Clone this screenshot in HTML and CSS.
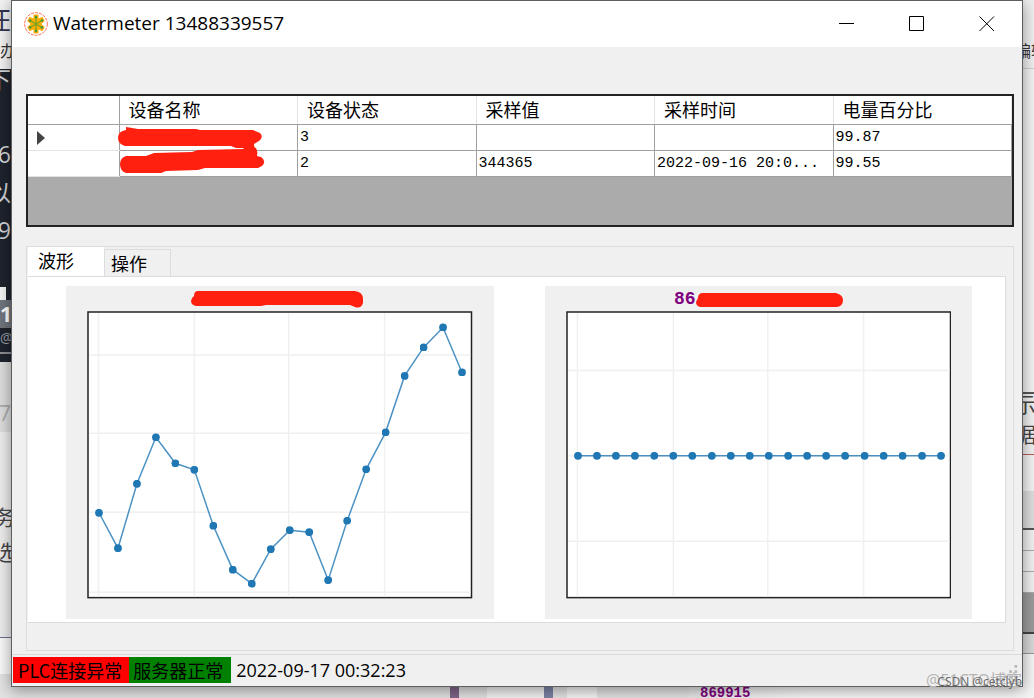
FILE: index.html
```html
<!DOCTYPE html>
<html lang="zh-CN">
<head>
<meta charset="utf-8">
<title>Watermeter 13488339557</title>
<link rel="stylesheet" href="styles.css">
</head>
<body>
<div class="desktop">
  <aside class="edge edge-left">
    <div class="e-top"><span class="frag frag-big">汪</span><span class="frag frag-menu">待办</span></div>
    <div class="e-dark">
      <span class="frag f-light f-first">下</span>
      <span class="frag f-light f-six">6</span>
      <span class="frag f-light">以</span>
      <span class="frag f-light">9</span>
      <span class="e-block"></span>
      <span class="frag f-one">1</span>
      <span class="frag f-at">@C</span>
      <span class="e-rule"></span>
    </div>
    <div class="e-grey"><span class="frag f-seven">7</span></div>
    <div class="e-pale"><span class="frag">务</span><span class="frag">选</span></div>
    <div class="e-white"></div>
    <div class="e-base"></div>
  </aside>

  <main class="window">
    <header class="titlebar">
      <svg class="app-icon" viewBox="0 0 24 24" aria-hidden="true">
        <circle cx="12" cy="12" r="11.300" fill="#fff" stroke="#ff6a4c" stroke-width="1" stroke-dasharray="3 1"/>
        <path d="M9.500 2.500h5v4l4-1.700 2.200 4.200-3.400 3 3.400 3-2.200 4.200-4-1.700v4h-5v-4l-4 1.700-2.200-4.200 3.400-3-3.400-3 2.200-4.200 4 1.700z" fill="#ffad05"/>
        <path d="M12 5v14M6 8.500l12 7M18 8.500l-12 7" stroke="#74a51b" stroke-width="1.300"/>
        <g fill="#3c9b35"><circle cx="12" cy="5" r="1.300"/><circle cx="12" cy="19" r="1.300"/><circle cx="6" cy="8.500" r="1.300"/><circle cx="18" cy="8.500" r="1.300"/><circle cx="6" cy="15.500" r="1.300"/><circle cx="18" cy="15.500" r="1.300"/></g>
      </svg>
      <h1 class="title">Watermeter 13488339557</h1>
      <div class="controls">
        <button class="ctl" type="button" aria-label="最小化"><svg viewBox="0 0 16 16"><path d="M0 7.500h15"/></svg></button>
        <button class="ctl" type="button" aria-label="最大化"><svg viewBox="0 0 16 16"><path d="M.5.5h14v14H.5z"/></svg></button>
        <button class="ctl" type="button" aria-label="关闭"><svg viewBox="0 0 16 16"><path d="M.5.5l14.500 14.500M15 .5L.5 15"/></svg></button>
      </div>
    </header>

    <div class="client">
      <section class="datagrid">
        <table class="grid">
          <thead>
            <tr><th class="rowhead"></th><th>设备名称</th><th>设备状态</th><th>采样值</th><th>采样时间</th><th>电量百分比</th></tr>
          </thead>
          <tbody>
            <tr>
              <td class="rowhead"><svg class="pointer" viewBox="0 0 8 14" aria-hidden="true"><path d="M0 0l8 7-8 7z"/></svg></td>
              <td class="masked">
                <svg class="mask" viewBox="0 0 148 48" aria-hidden="true">
                  <path d="M8 0l12 2h58l4 1 53 0 7 3q4 4-1 8l-5 3q0 4 2 4 2 4 1 8l4 1q6 4 1 9l-4 2H87l-7 2-32 1-5 2H8q-6-2-6-9 0-6 6-8l20 0 8-3 38-1 6-2 46-1-1-1H118l-5-2H7q-7-2-7-8 0-7 8-8z"/>
                </svg>
              </td>
              <td>3</td><td></td><td></td><td>99.87</td>
            </tr>
            <tr><td class="rowhead"></td><td></td><td>2</td><td>344365</td><td>2022-09-16 20:0...</td><td>99.55</td></tr>
          </tbody>
        </table>
      </section>

      <section class="tabs">
        <div class="tablist" role="tablist">
          <button class="tab active" type="button" role="tab" aria-selected="true">波形</button>
          <button class="tab" type="button" role="tab" aria-selected="false">操作</button>
        </div>
        <div class="page" role="tabpanel">
          <figure class="chart">
            <figcaption class="caption caption-first">
              <svg class="strike" viewBox="0 0 172 17" aria-hidden="true"><path d="M7 0h157q8 1 8 8v4q-2 6-8 4l-5-2H75l-5 1H5q-5-1-5-5 0-3 3-5 0-5 4-5z"/></svg>
            </figcaption>
            <svg class="plot" viewBox="0 0 386 288" role="img" aria-label="波形">
              <defs><marker id="dot" viewBox="0 0 8 8" refX="4" refY="4" markerWidth="8" markerHeight="8" markerUnits="userSpaceOnUse"><circle cx="4" cy="4" r="3.900" fill="#1f77b4"/></marker></defs>
              <rect class="frame" x="1" y="1" width="384" height="286"/>
              <path class="lines" d="M11.500 2v284M107.500 2v284M202 2v284M298 2v284M2 44h382M2 122.500h382M2 201.500h382M2 281.500h382"/>
              <polyline class="series" points="12,202 31,237.5 50,173 69,126.5 88.5,152.5 107.5,159 126.5,215 146,259 165,273 184,238.5 203,219.5 222.5,221.5 241.5,269.5 260.5,210 279.5,158.5 299,121.5 318,65 337,36.5 356.5,16.5 375.5,61.5"/>
            </svg>
          </figure>
          <figure class="chart">
            <figcaption class="caption">86<svg class="strike strike-short" viewBox="0 0 147 14" aria-hidden="true"><path d="M7 0h133q7 2 7 7 0 6-6 7H4q-4-1-4-5l2-4q0-5 5-5z"/></svg></figcaption>
            <svg class="plot" viewBox="0 0 386 288" role="img" aria-label="波形">
              <rect class="frame" x="1" y="1" width="384" height="286"/>
              <path class="lines" d="M11.500 2v284M107.500 2v284M202 2v284M298 2v284M2 59.500h382M2 145h382M2 230.500h382"/>
              <polyline class="series" points="12,145 31,145 50,145 69,145 88.5,145 107.5,145 126.5,145 146,145 165,145 184,145 203,145 222.5,145 241.5,145 260.5,145 279.5,145 299,145 318,145 337,145 356.5,145 375.5,145"/>
            </svg>
          </figure>
        </div>
      </section>
    </div>

    <footer class="status">
      <span class="badge bad">PLC连接异常</span><span class="badge good">服务器正常</span><time class="clock">2022-09-17 00:32:23</time>
      <svg class="grip" viewBox="0 0 16 16" aria-hidden="true"><path d="M12 0h3v3h-3zM6 6h3v3H6zM12 6h3v3h-3zM0 12h3v3H0zM6 12h3v3H6zM12 12h3v3h-3z"/></svg>
    </footer>
  </main>

  <aside class="edge edge-right">
    <div class="r-top"><span class="frag frag-menu">编辑</span></div>
    <div class="r-main"></div>
    <div class="r-text"><span class="frag">示</span><span class="frag">据</span></div>
    <div class="r-pale"></div>
    <div class="r-bar"></div>
    <div class="r-cell"></div>
    <div class="r-cell"></div>
    <div class="r-cell"></div>
    <div class="r-dark"></div>
    <div class="r-gap"></div>
    <div class="r-base"></div>
  </aside>

  <div class="under">
    <span class="u-pad"></span><span class="u-plum"></span><span class="u-mid"></span><span class="u-light"></span><span class="u-blue"></span><span class="u-small"></span><span class="u-light2"></span><span class="u-wide"></span><span class="u-text">869915</span>
  </div>

  <span class="mark mark-back">@51CTO博客</span>
  <span class="mark mark-front">CSDN @cetclyb</span>
</div>
</body>
</html>
```

FILE: styles.css
```css
* { box-sizing: border-box; }
body {
  margin: 0;
  font-family: "Open Sans", "Noto Sans CJK SC", sans-serif;
  color: #000;
}
.desktop {
  position: relative;
  display: grid;
  grid-template-columns: 11px minmax(0, 1fr) 11px;
  grid-template-rows: minmax(0, 1fr) 11px;
  height: 100vh;
  overflow: hidden;
  background: #eee;
}

/* Strips of the windows behind */
.edge { display: flex; flex-direction: column; grid-row: 1 / 3; overflow: hidden; }
.edge-left { grid-column: 1; }
.edge-right { grid-column: 3; grid-row: 1 / 3; }
.edge > div { display: flex; flex-direction: column; flex: none; overflow: hidden; }
.edge-left > div { align-items: flex-end; }
.frag { font-size: 21px; line-height: 35px; color: #444; white-space: nowrap; }
.edge-right .frag { text-indent: -8px; }
.e-top { height: 69px; background: #f2f2f3; }
.frag-big { font-size: 26px; line-height: 40px; color: #33334f; }
.frag-menu { font-size: 16px; line-height: 22px; color: #333; }
.edge-left .frag-menu { margin-right: -5px; }
.e-dark { height: 293px; background: #1e232d; }
.f-light { font-size: 23px; line-height: 38px; color: #d4d6d8; }
.f-first { line-height: 20px; }
.f-six { padding-top: 46px; }
.e-block { width: 100%; height: 13px; margin-top: 38px; background: linear-gradient(90deg, #f4f4f4 6px, #1e232d 6px); }
.f-one { width: 100%; line-height: 28px; font-weight: 700; color: #fff; background: #70747c; }
.f-at { font-size: 14px; line-height: 20px; color: #9a9da4; align-self: flex-start; }
.e-rule { width: 100%; height: 2px; margin-top: 4px; background: #8c8c94; }
.e-grey { height: 70px; background: #dcdcdc; }
.f-seven { padding-top: 34px; color: #aaa; }
.e-pale { height: 206px; padding-top: 68px; background: #ececec; border-bottom: 1px solid #69708c; }
.e-pale .frag { margin-right: -4px; }
.e-white { height: 36px; background: #f8f8f8; }
.e-base { height: 24px; background: #e2e2e2; }

.r-top { height: 69px; padding-top: 40px; background: #eee; border-bottom: 1px solid #ccc; }
.r-main { height: 325px; background: #f2f2f2; border-bottom: 2px solid #555; }
.r-text { height: 61px; background: #f0f0f0; border-bottom: 1px solid #b65c52; }
.r-text .frag { line-height: 40px; }
.r-text .frag:first-child { line-height: 20px; }
.r-pale { height: 36px; background: #f2f2f2; }
.r-bar { height: 39px; background: #ddd; border-bottom: 2px solid #555; }
.r-cell { height: 21px; background: #f0f0f0; border-bottom: 1px solid #aaa; }
.r-dark { height: 41px; background: #9b9b9b; border-bottom: 2px solid #444; }
.r-gap { height: 20px; background: #d8d8d8; border-bottom: 1px solid #999; }
.r-base { height: 44px; background: #f5f5f5; }

.under { grid-column: 2; grid-row: 2; display: flex; background: #e2e2e2; overflow: hidden; }
.under span { flex: none; height: 11px; }
.under .u-pad { width: 439px; }
.u-plum { width: 9px; background: #806488; }
.u-mid { width: 28px; }
.u-light { width: 57px; background: #f2f2f2; }
.u-blue { width: 9px; background: #7b82a4; }
.u-small { width: 14px; }
.u-light2 { width: 30px; background: #f4f4f4; }
.u-wide { width: 92px; }
.under .u-text {
  flex: 1;
  padding-left: 11px;
  font: 700 14px/12px "Liberation Mono", monospace;
  color: #800080;
  background: linear-gradient(90deg, #e6e6e6, #f8f8f8 120px);
}

/* Application window */
.window {
  position: relative;
  grid-column: 2;
  grid-row: 1;
  display: flex;
  flex-direction: column;
  background: #f0f0f0;
  border: 1px solid #5e5e5e;
  box-shadow: 0 3px 14px rgba(0, 0, 0, .4);
}
.titlebar { display: flex; align-items: center; flex: none; height: 46px; padding-left: 12px; background: #fff; }
.app-icon { width: 24px; height: 24px; margin-right: 5px; }
.title { margin: 0; padding-bottom: 2px; font-size: 19px; font-weight: 400; line-height: 26px; white-space: nowrap; }
.controls { display: flex; margin-left: auto; height: 100%; }
.ctl { display: grid; place-items: center; width: 70px; padding: 0; border: 0; background: none; }
.ctl svg { width: 16px; height: 16px; fill: none; stroke: #000; stroke-width: 1; }

.client { display: flex; flex-direction: column; flex: 1; gap: 19px; min-height: 0; padding: 47px 8px 3px 14px; }

/* Data grid */
.datagrid { flex: none; height: 133px; background: #ababab; border: 2px solid #222; }
.grid { width: 100%; border-collapse: collapse; table-layout: fixed; background: #fff; }
.grid th { height: 28px; padding: 0 9px; font-size: 18px; font-weight: 400; line-height: 26px; text-align: left; border: 1px solid #a0a0a0; border-width: 0 0 1px; border-right: 1px solid #e3e3e3; }
.grid td { height: 25px; padding: 1px 2px 0; font: 15px/24px "Liberation Mono", monospace; white-space: nowrap; border: 1px solid #a0a0a0; border-top: 0; }
.grid th.rowhead { width: 91px; border-right-color: #a0a0a0; }
.grid td.rowhead { padding-left: 9px; border-left: 0; border-bottom-color: #e3e3e3; }
.pointer { display: block; width: 8px; height: 14px; fill: #444; }
.grid td.masked { position: relative; }
.mask { position: absolute; z-index: 1; left: -2px; top: 2px; width: 148px; height: 48px; fill: #ff2010; }

/* Tabs */
.tabs { display: flex; flex-direction: column; flex: 1; min-height: 0; padding: 0 7px 28px 1px; border: 1px solid #dcdcdc; }
.tablist { display: flex; align-items: flex-end; height: 29px; }
.tab { height: 27px; width: 67px; padding: 0 0 1px 6px; font: 18px/24px "Noto Sans CJK SC", sans-serif; color: #000; text-align: left; background: #f0f0f0; border: 1px solid #dcdcdc; border-bottom: 0; }
.tab.active { height: 29px; width: 76px; padding: 0 0 4px 9px; background: #fff; border-color: #fff; }
.page { display: grid; grid-template-columns: 1fr 1fr; gap: 51px; align-content: start; flex: 1; padding: 9px 33px 3px 38px; background: #fff; border: 1px solid #dcdcdc; border-left: 0; }
.chart { margin: 0; padding: 0 21px 20px; background: #f0f0f0; }
.caption { display: flex; align-items: center; justify-content: center; height: 25px; padding-top: 2px; font: 700 18px/23px "Liberation Mono", monospace; color: #800080; }
.caption-first { padding-right: 6px; }
.strike { width: 172px; height: 17px; fill: #ff2010; }
.strike-short { width: 147px; height: 14px; }
.plot { display: block; width: 100%; }
.frame { fill: #fff; stroke: #222; stroke-width: 1.500; }
.lines { fill: none; stroke: #f0f0f0; stroke-width: 1.500; }
.series { fill: none; stroke: #1f77b4; stroke-opacity: .8; stroke-width: 1.500; marker-start: url(#dot); marker-mid: url(#dot); marker-end: url(#dot); }

/* Status bar */
.status { display: flex; align-items: flex-start; flex: none; height: 32px; padding: 2px 1px 0; border-top: 1px solid #dadada; }
.badge { height: 26px; padding: 0 7px 0 5px; font: 18px/26px "Noto Sans CJK SC", sans-serif; white-space: nowrap; }
.good { padding-left: 4px; padding-right: 8px; background: #008000; }
.bad { background: #f00; }
.clock { padding-left: 5px; font-size: 18px; line-height: 26px; }
.grip { width: 14px; height: 14px; margin: 8px 3px 0 auto; fill: #b8b8b8; }

.mark { position: absolute; white-space: nowrap; }
.mark-back { right: 12px; bottom: 8px; font-size: 16px; line-height: 20px; color: #b4b4b4; }
.mark-front { right: 12px; bottom: 8px; font-size: 12px; line-height: 16px; color: #666; }
```
